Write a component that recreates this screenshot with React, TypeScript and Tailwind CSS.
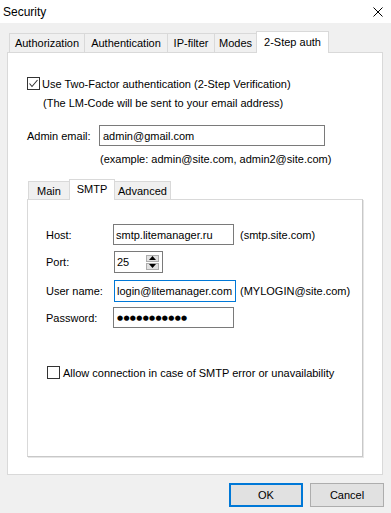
import React from "react";

function CheckBox({ checked }: { checked?: boolean }) {
  return (
    <div className="w-[13px] h-[13px] border border-[#333333] bg-white flex items-center justify-center shrink-0">
      {checked && (
        <svg width="11" height="11" viewBox="0 0 11 11">
          <path d="M1.5 5.5 L4 8.5 L9.5 2" fill="none" stroke="#333333" strokeWidth="1.1" />
        </svg>
      )}
    </div>
  );
}

function Tab({ label, w, selected, cls }: { label: string; w: string; selected?: boolean; cls: string }) {
  return (
    <div
      className={
        selected
          ? `${w} ${cls} relative z-10 bg-white flex items-center justify-center pb-[2px]`
          : `${w} ${cls} bg-[#f0f0f0] flex items-center justify-center`
      }
    >
      {label}
    </div>
  );
}

export default function App() {
  return (
    <div className="w-[391px] h-[513px] bg-[#f0f0f0] flex flex-col text-[11px] leading-[14px] text-black font-['Segoe_UI','Liberation_Sans',sans-serif] overflow-hidden">
      {/* Title bar */}
      <div className="h-[23px] bg-white flex items-center justify-between pl-[3px] pr-[8px] shrink-0">
        <span className="text-[12px] leading-[16px]">Security</span>
        <svg width="10" height="10" viewBox="0 0 10 10">
          <path d="M0.5 0.5 L9.5 9.5 M9.5 0.5 L0.5 9.5" stroke="#000" strokeWidth="1" />
        </svg>
      </div>

      {/* Outer tabs */}
      <div className="ml-[7px] mt-[8px] w-[376px] flex flex-col">
        <div className="flex items-end h-[21px] pl-[2px]">
          <Tab label="Authorization" w="w-[75px]" cls="h-[19px] border-l border-t border-[#d9d9d9]" />
          <Tab label="Authentication" w="w-[83px]" cls="h-[19px] border-l border-t border-[#d9d9d9]" />
          <Tab label="IP-filter" w="w-[47px]" cls="h-[19px] border-l border-t border-[#d9d9d9]" />
          <Tab label="Modes" w="w-[42px]" cls="h-[19px] border-l border-t border-[#d9d9d9]" />
          <Tab label="2-Step auth" w="w-[73px]" selected cls="h-[22px] -mb-[1px] border-l border-t border-r border-[#d9d9d9]" />
        </div>

        {/* Outer panel */}
        <div className="h-[423px] border border-[#d9d9d9] bg-white flex flex-col pl-[19px] pt-[24px]">
          <div className="flex items-center h-[13px]">
            <CheckBox checked />
            <span className="ml-[2px] whitespace-nowrap">Use Two-Factor authentication (2-Step Verification)</span>
          </div>
          <div className="mt-[5px] h-[15px] ml-[16px] whitespace-nowrap flex items-center">(The LM-Code will be sent to your email address)</div>

          <div className="mt-[15px] flex items-center h-[21px]">
            <span className="w-[72px] whitespace-nowrap">Admin email:</span>
            <div className="w-[226px] h-[21px] border border-[#7a7a7a] bg-white flex items-center pl-[3px]">admin@gmail.com</div>
          </div>
          <div className="mt-[5px] h-[15px] ml-[73px] whitespace-nowrap flex items-center">(example: admin@site.com, admin2@site.com)</div>

          {/* Inner tabs */}
          <div className="mt-[13px] w-[336px] flex flex-col">
            <div className="flex items-end h-[20px] pl-[1px]">
              <Tab label="Main" w="w-[41px]" cls="h-[18px] border-l border-t border-[#d9d9d9]" />
              <Tab label="SMTP" w="w-[46px]" selected cls="h-[21px] -mb-[1px] border-l border-t border-r border-[#d9d9d9]" />
              <Tab label="Advanced" w="w-[56px]" cls="h-[18px] border-t border-r border-[#d9d9d9]" />
            </div>
            <div className="h-[258px] border border-[#d9d9d9] border-r-[#c8c8c8] border-b-[#c8c8c8] shadow-[1px_1px_0_#e6e6e6] bg-white flex flex-col pl-[18px] pt-[24px]">
              <div className="flex items-center h-[21px]">
                <span className="w-[67px]">Host:</span>
                <div className="w-[121px] h-[21px] border border-[#7a7a7a] flex items-center pl-[2px] whitespace-nowrap">smtp.litemanager.ru</div>
                <span className="ml-[6px] whitespace-nowrap">(smtp.site.com)</span>
              </div>
              <div className="mt-[6px] flex items-center h-[22px]">
                <span className="w-[68px]">Port:</span>
                <div className="w-[49px] h-[22px] border border-[#7a7a7a] flex items-center pl-[2px] pr-[3px] justify-between">
                  <span>25</span>
                  <div className="flex flex-col gap-[1px]">
                    <div className="w-[13px] h-[7px] bg-[#e1e1e1] border border-[#adadad] flex items-center justify-center">
                      <svg width="7" height="4" viewBox="0 0 7 4"><path d="M0 4 L3.5 0 L7 4 Z" fill="#000" /></svg>
                    </div>
                    <div className="w-[13px] h-[7px] bg-[#e1e1e1] border border-[#adadad] flex items-center justify-center">
                      <svg width="7" height="4" viewBox="0 0 7 4"><path d="M0 0 L3.5 4 L7 0 Z" fill="#000" /></svg>
                    </div>
                  </div>
                </div>
              </div>
              <div className="mt-[7px] flex items-center h-[22px]">
                <span className="w-[68px] whitespace-nowrap">User name:</span>
                <div className="w-[122px] h-[22px] border border-[#0078d7] flex items-center pl-[2px] whitespace-nowrap overflow-hidden">login@litemanager.com</div>
                <span className="ml-[4px] whitespace-nowrap">(MYLOGIN@site.com)</span>
              </div>
              <div className="mt-[5px] flex items-center h-[21px]">
                <span className="w-[67px]">Password:</span>
                <div className="w-[121px] h-[21px] border border-[#7a7a7a] flex items-center pl-[3px] whitespace-nowrap text-[7px] tracking-[0.3px] font-['DejaVu_Sans',sans-serif]">●●●●●●●●●●●</div>
              </div>
              <div className="mt-[38px] ml-[1px] flex items-center h-[13px]">
                <CheckBox />
                <span className="ml-[3px] whitespace-nowrap">Allow connection in case of SMTP error or unavailability</span>
              </div>
            </div>
          </div>
        </div>
      </div>

      {/* Buttons */}
      <div className="mt-[8px] flex justify-end pr-[7px] gap-[7px]">
        <div className="w-[74px] h-[24px] bg-[#e1e1e1] border-2 border-[#0078d7] flex items-center justify-center">OK</div>
        <div className="w-[74px] h-[24px] bg-[#e1e1e1] border border-[#adadad] flex items-center justify-center">Cancel</div>
      </div>
    </div>
  );
}
